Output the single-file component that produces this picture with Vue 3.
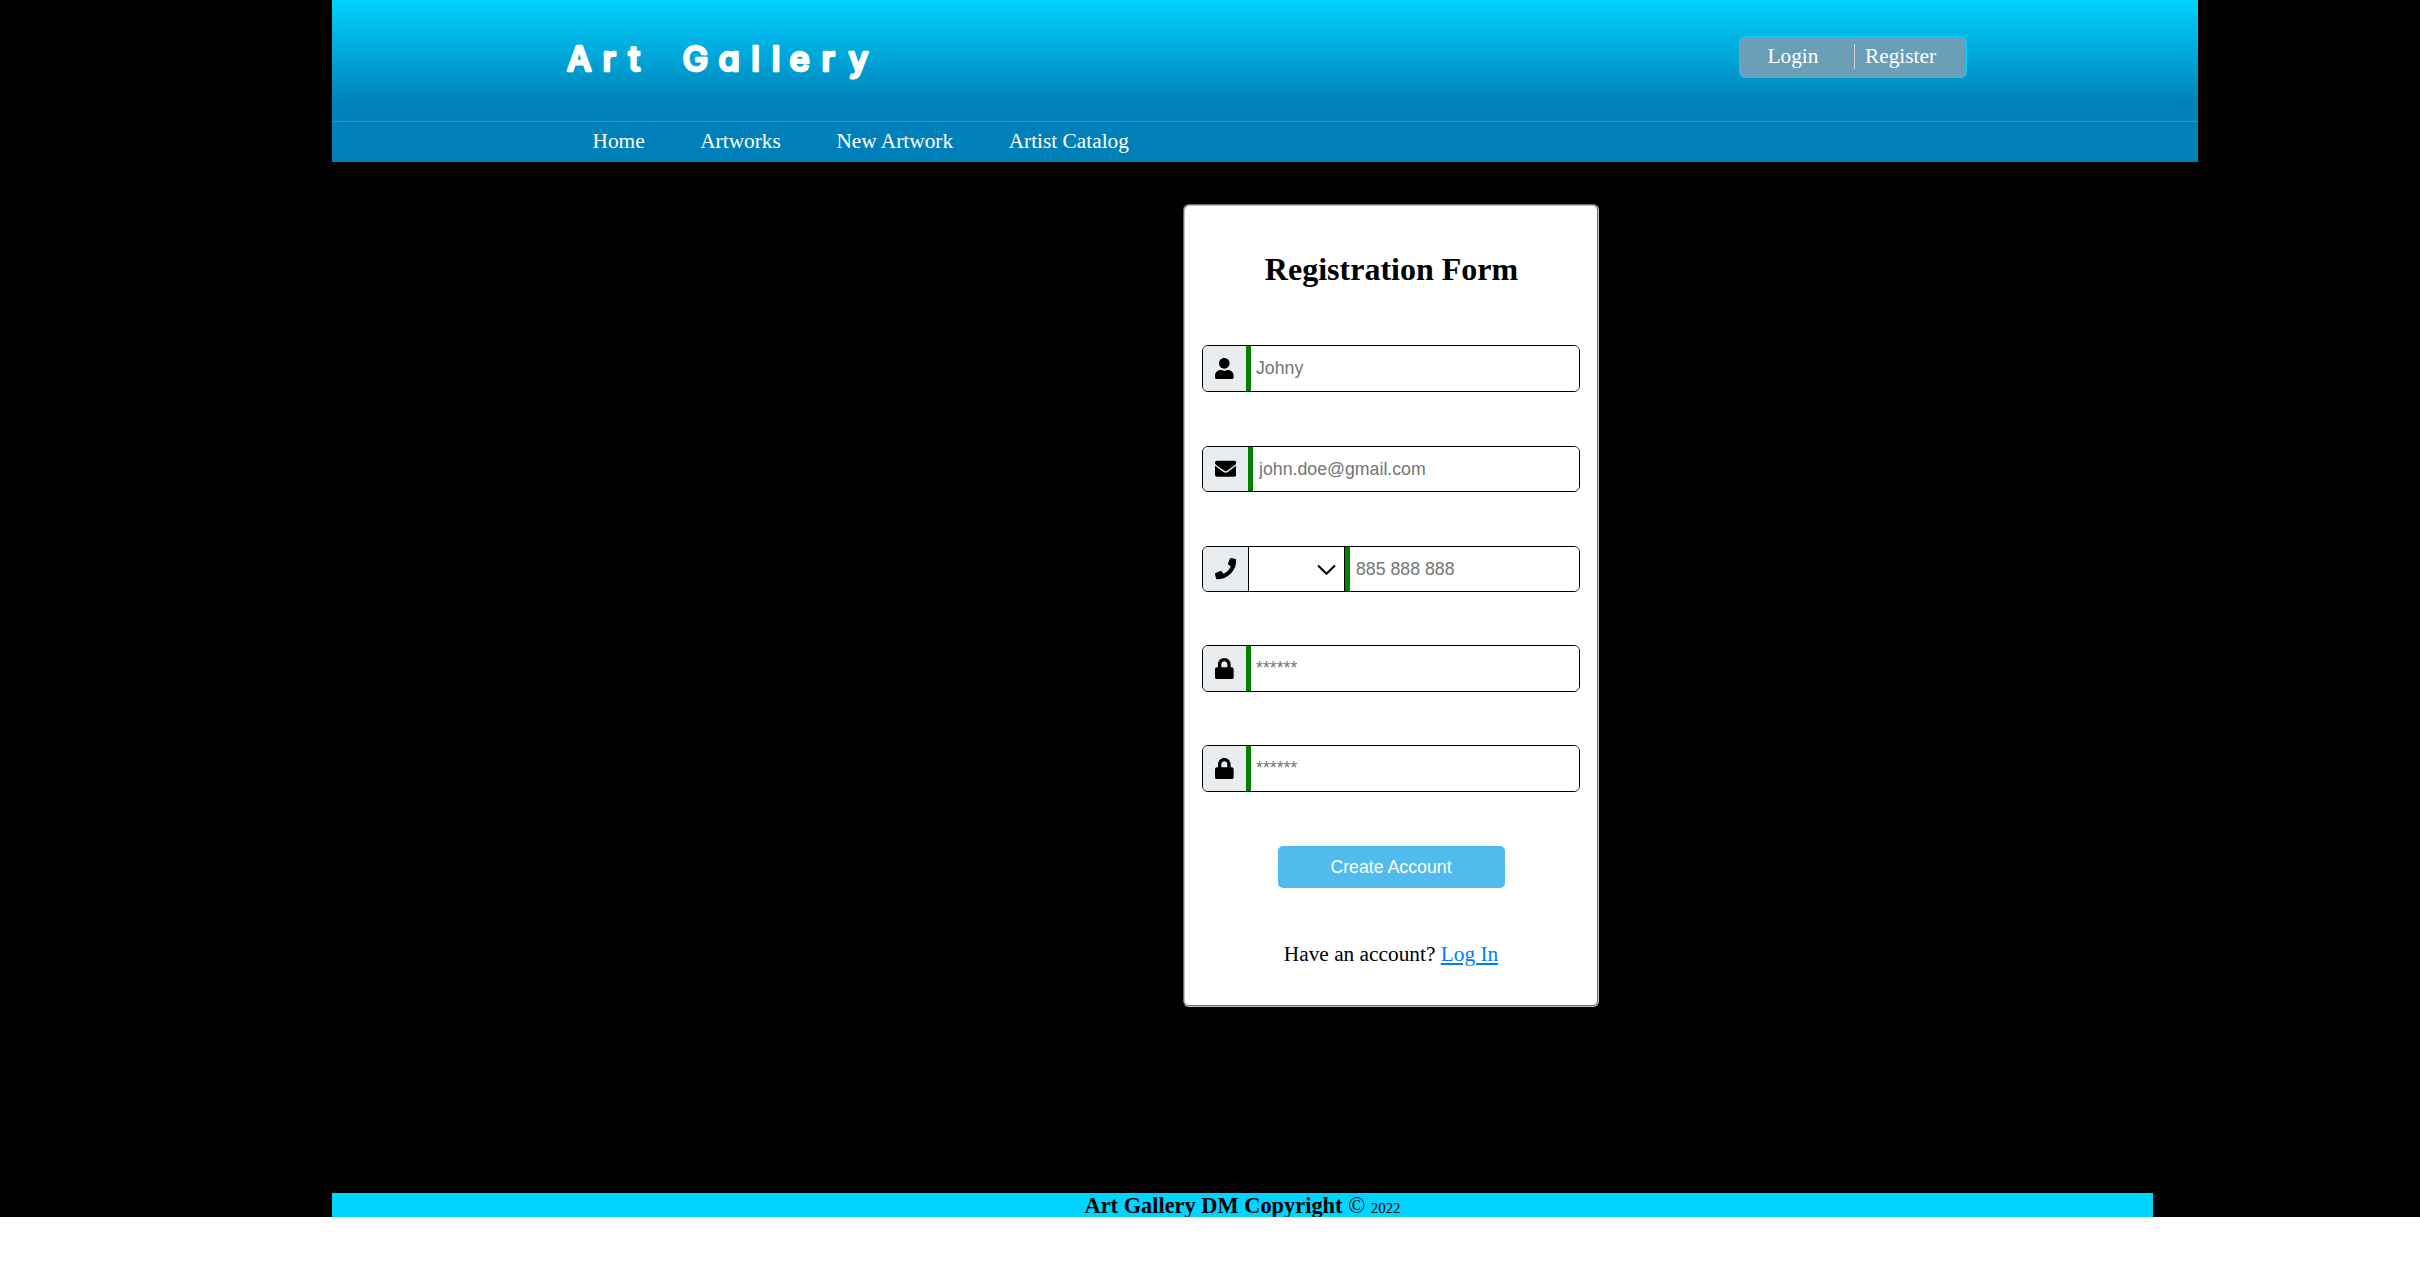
<script setup>
const ICONS = {
  user: { w: 448, d: 'M224 256c70.7 0 128-57.3 128-128S294.7 0 224 0 96 57.3 96 128s57.3 128 128 128zm89.6 32h-16.7c-22.2 10.2-46.9 16-72.9 16s-50.6-5.8-72.9-16h-16.7C60.2 288 0 348.2 0 422.4V464c0 26.5 21.5 48 48 48h352c26.5 0 48-21.5 48-48v-41.6c0-74.2-60.2-134.4-134.4-134.4z' },
  mail: { w: 512, d: 'M502.3 190.8c3.9-3.1 9.7-.2 9.7 4.7V400c0 26.5-21.5 48-48 48H48c-26.5 0-48-21.5-48-48V195.6c0-5 5.7-7.8 9.7-4.7 22.4 17.4 52.1 39.5 154.1 113.6 21.1 15.4 56.7 47.8 92.2 47.6 35.7.3 72-32.8 92.3-47.6 102-74.1 131.6-96.3 154-113.7zM256 320c23.2.4 56.6-29.2 73.4-41.4 132.7-96.3 142.8-104.7 173.4-128.7 5.8-4.5 9.2-11.5 9.2-18.9v-19c0-26.5-21.5-48-48-48H48c-26.5 0-48 21.5-48 48v19c0 7.4 3.4 14.3 9.2 18.9 30.6 23.9 40.7 32.4 173.4 128.7 16.8 12.2 50.2 41.8 73.4 41.4z' },
  phone: { w: 512, d: 'M493.4 24.6l-104-24c-11.3-2.6-22.9 3.3-27.5 13.9l-48 112c-4.2 9.8-1.4 21.3 6.9 28l60.6 49.6c-36 76.7-98.9 140.5-177.2 177.2l-49.6-60.6c-6.8-8.3-18.2-11.1-28-6.9l-112 48C3.9 366.5-2 378.1.6 389.4l24 104C27.1 504.2 36.7 512 48 512c256.1 0 464-207.5 464-464 0-11.2-7.7-20.9-18.6-23.4z' },
  lock: { w: 448, d: 'M400 224h-24v-72C376 68.2 307.8 0 224 0S72 68.2 72 152v72H48c-26.5 0-48 21.5-48 48v192c0 26.5 21.5 48 48 48h352c26.5 0 48-21.5 48-48V272c0-26.5-21.5-48-48-48zm-104 0H152v-72c0-39.7 32.3-72 72-72s72 32.3 72 72v72z' },
}
const links = ['Home', 'Artworks', 'New Artwork', 'Artist Catalog']
const fields = [
  { icon: 'user', type: 'text', hint: 'Johny' },
  { icon: 'mail', type: 'email', hint: 'john.doe@gmail.com', short: true },
  { icon: 'phone', type: 'tel', hint: '885 888 888', short: true, code: true },
  { icon: 'lock', type: 'password', hint: '******' },
  { icon: 'lock', type: 'password', hint: '******' },
]
</script>

<template>
  <div class="page">
    <header class="header">
      <div class="banner">
        <svg class="logo" width="320" height="60" viewBox="0 0 320 60">
          <text y="42.6" x="4 39.5 65.5 86 119.5 155.5 188.2 208.7 226.5 258.5 285.5">Art Gallery</text>
        </svg>
        <div class="account">
          <a class="login">Login</a>
          <a class="register">Register</a>
        </div>
      </div>
      <nav class="nav">
        <a v-for="l in links" :key="l">{{ l }}</a>
      </nav>
    </header>

    <main class="main">
      <form class="card">
        <h1>Registration Form</h1>
        <div v-for="(f, i) in fields" :key="i" class="slot">
          <div class="field" :class="{ short: f.short }">
            <span class="icon" :class="{ wide: f.short }">
              <svg :viewBox="`0 0 ${ICONS[f.icon].w} 512`"><path :d="ICONS[f.icon].d" /></svg>
            </span>
            <span v-if="f.code" class="code">
              <svg viewBox="0 0 16 16"><path d="M1.6 5L8 11.2 14.4 5" /></svg>
            </span>
            <input :type="f.type" :placeholder="f.hint" />
          </div>
        </div>
        <button type="button">Create Account</button>
        <p>Have an account? <a>Log In</a></p>
      </form>
    </main>

    <footer class="footer"><b>Art Gallery DM Copyright</b> © <small>2022</small></footer>
  </div>
</template>

<style>
body { background: #fff; }
</style>

<style scoped>
.page {
  box-sizing: border-box;
  height: 1217px;
  padding-left: 332px;
  background: #000;
  display: flex;
  flex-direction: column;
  overflow: hidden;
  font-family: "Liberation Serif", serif;
  font-size: 21.33px;
}
.header { width: 1866px; height: 162px; flex: none; background: #0080b8; color: #fff; }
.banner {
  box-sizing: border-box;
  height: 122px;
  border-bottom: 1px solid #00a4ee;
  background: linear-gradient(#00d2ff, #0080b8 105px);
  display: flex;
  justify-content: space-between;
  padding: 28px 231px 0 231px;
}
.logo { overflow: visible; }
.logo text {
  font-family: "Comic Sans MS", Inter, sans-serif;
  font-feature-settings: "cv11";
  font-size: 34.5px;
  font-weight: 500;
  fill: #fff;
  stroke: #fff;
  stroke-width: 2.6px;
  stroke-linejoin: round;
}
.account {
  box-sizing: border-box;
  width: 228px;
  height: 42px;
  margin-top: 8px;
  border: 1px solid #00d2ff;
  border-radius: 6px;
  background: #6b9fb8;
  display: flex;
  padding: 7px 0 0 27.5px;
  line-height: 25px;
}
.login { width: 86.5px; height: 25px; border-right: 1px solid #d3d3d3; }
.register { margin-left: 10px; }
.nav { height: 40px; display: flex; gap: 55.6px; padding-left: 260.5px; line-height: 39px; }
.main { flex: none; height: 1031px; padding: 42px 0 0 851px; box-sizing: border-box; }
.card {
  box-sizing: border-box;
  width: 416px;
  height: 803px;
  border: 2px groove #c0c0c0;
  border-radius: 6px;
  background: #fff;
  padding: 0 17px;
  display: flex;
  flex-direction: column;
  align-items: stretch;
}
h1 { margin: 43px 0 0; padding-left: 1px; height: 96px; font-size: 32px; line-height: 40px; text-align: center; }
.slot { height: 100px; }
.field {
  box-sizing: border-box;
  height: 47px;
  border: 1px solid #000;
  border-radius: 6px;
  display: flex;
  overflow: hidden;
}
.short { height: 46px; margin-top: 1px; }
.icon { width: 43px; flex: none; background: #e9ecef; display: flex; align-items: center; padding-left: 12px; box-sizing: border-box; }
.icon.wide { width: 45px; }
.icon svg { height: 21.3px; }
.code { width: 97px; flex: none; box-sizing: border-box; border: solid #000; border-width: 0 1px; display: flex; align-items: center; justify-content: flex-end; padding-right: 7px; }
.code svg { width: 21px; height: 21px; fill: none; stroke: #000; stroke-width: 1.6; }
input {
  flex: 1;
  min-width: 0;
  border: 0;
  border-left: 5px solid #008000;
  padding: 0 5px;
  outline: 0;
  font: 17.73px "Liberation Sans", sans-serif;
}
.short input { padding-left: 6px; }
input::placeholder { color: #757575; }
button {
  align-self: center;
  width: 227px;
  height: 42px;
  margin-top: 1px;
  border: 0;
  border-radius: 5px;
  background: #50bbed;
  color: #fff;
  font: 17.73px "Liberation Sans", sans-serif;
}
p { margin: 54px 0 0; line-height: 25px; text-align: center; }
p a { color: #007bff; text-decoration: underline; }
.footer {
  width: 1821px;
  height: 24px;
  flex: none;
  overflow: hidden;
  background: #00d4ff;
  text-align: center;
  font-size: 22.4px;
  line-height: 26px;
}
small { font-size: 14.9px; }
</style>
